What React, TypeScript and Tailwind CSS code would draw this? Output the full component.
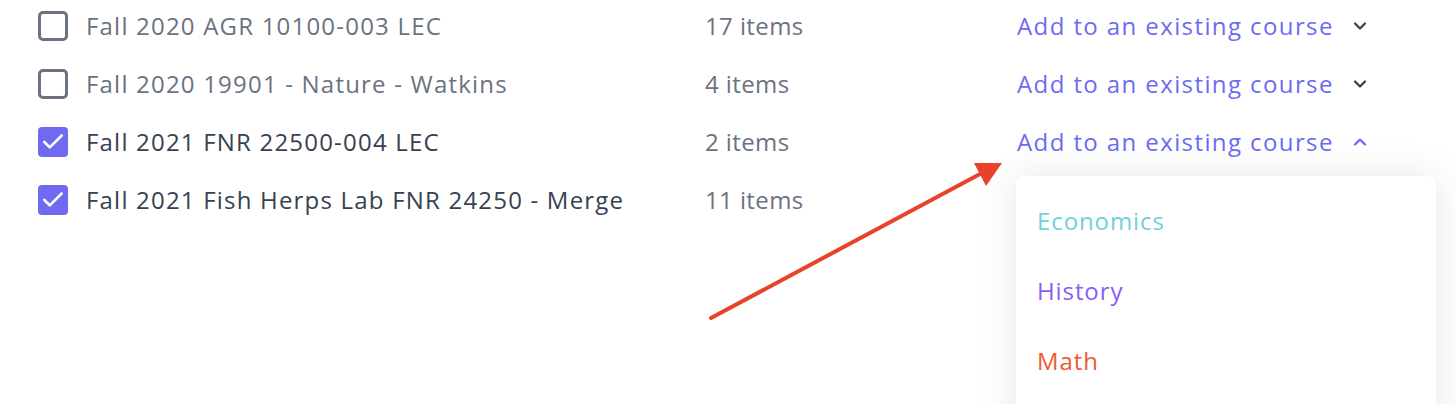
import { Check, ChevronDown, ChevronUp } from 'lucide-react'

type Course = {
  name: string
  count: number
  checked: boolean
  open?: boolean
}

const courses: Course[] = [
  { name: 'Fall 2020 AGR 10100-003 LEC', count: 17, checked: false },
  { name: 'Fall 2020 19901 - Nature - Watkins', count: 4, checked: false },
  { name: 'Fall 2021 FNR 22500-004 LEC', count: 2, checked: true, open: true },
  { name: 'Fall 2021 Fish Herps Lab FNR 24250 - Merge', count: 11, checked: true },
]

const options = [
  { label: 'Economics', color: 'text-[#6fd0de]' },
  { label: 'History', color: 'text-[#8b5cf6]' },
  { label: 'Math', color: 'text-[#f0592f]' },
]

function Checkbox({ checked }: { checked: boolean }) {
  if (checked) {
    return (
      <div className="w-[30px] h-[30px] rounded-[4px] bg-[#7069f2] flex items-center justify-center shrink-0">
        <Check className="w-[26px] h-[26px] text-white" strokeWidth={2.4} />
      </div>
    )
  }
  return <div className="w-[30px] h-[30px] rounded-[5px] border-[3px] border-[#6b7280] bg-white shrink-0" />
}

export default function App() {
  return (
    <div className="relative w-[1456px] h-[404px] overflow-hidden bg-white font-['Open_Sans',sans-serif]">
      {/* Course rows */}
      <div className="flex flex-col pt-[11px] gap-[28px]">
        {courses.map((c, idx) => (
          <div key={idx} className="flex items-center h-[30px] pl-[38px]">
            <Checkbox checked={c.checked} />
            <span
              className={`ml-[18px] w-[619px] text-[24px] tracking-[1.2px] whitespace-nowrap ${
                c.checked ? 'text-[#374151]' : 'text-[#6b7280]'
              }`}
            >
              {c.name}
            </span>
            <span className="w-[312px] text-[24px] text-[#6b7280] tracking-[0.4px]">{c.count} items</span>
            {idx < 3 && (
              <div className="relative flex items-center">
                <span className="text-[24px] text-[#6c6cf2] font-medium tracking-[1.4px] whitespace-nowrap">
                  Add to an existing course
                </span>
                {c.open ? (
                  <ChevronUp className="ml-[16px] w-[20px] h-[20px] text-[#6c6cf2]" strokeWidth={2.75} />
                ) : (
                  <ChevronDown className="ml-[16px] w-[20px] h-[20px] text-[#374151]" strokeWidth={2.75} />
                )}
                {c.open && (
                  <div className="absolute left-[-1px] top-[52px] w-[420px] h-[260px] bg-white rounded-[8px] shadow-[0_0_40px_rgba(15,23,42,0.10)] z-10 flex flex-col pl-[21px] pt-[30px] gap-[40px]">
                    {options.map((o) => (
                      <span key={o.label} className={`text-[24px] tracking-[0.9px] leading-[30px] ${o.color}`}>
                        {o.label}
                      </span>
                    ))}
                  </div>
                )}
              </div>
            )}
          </div>
        ))}
      </div>

      {/* Annotation arrow */}
      <svg className="absolute left-0 top-0 pointer-events-none z-20" width="1456" height="404">
        <line x1="711" y1="318" x2="980" y2="174" stroke="#e8432a" strokeWidth="4" strokeLinecap="round" />
        <polygon points="1002,163 974,163 986,186" fill="#e8432a" />
      </svg>
    </div>
  )
}
